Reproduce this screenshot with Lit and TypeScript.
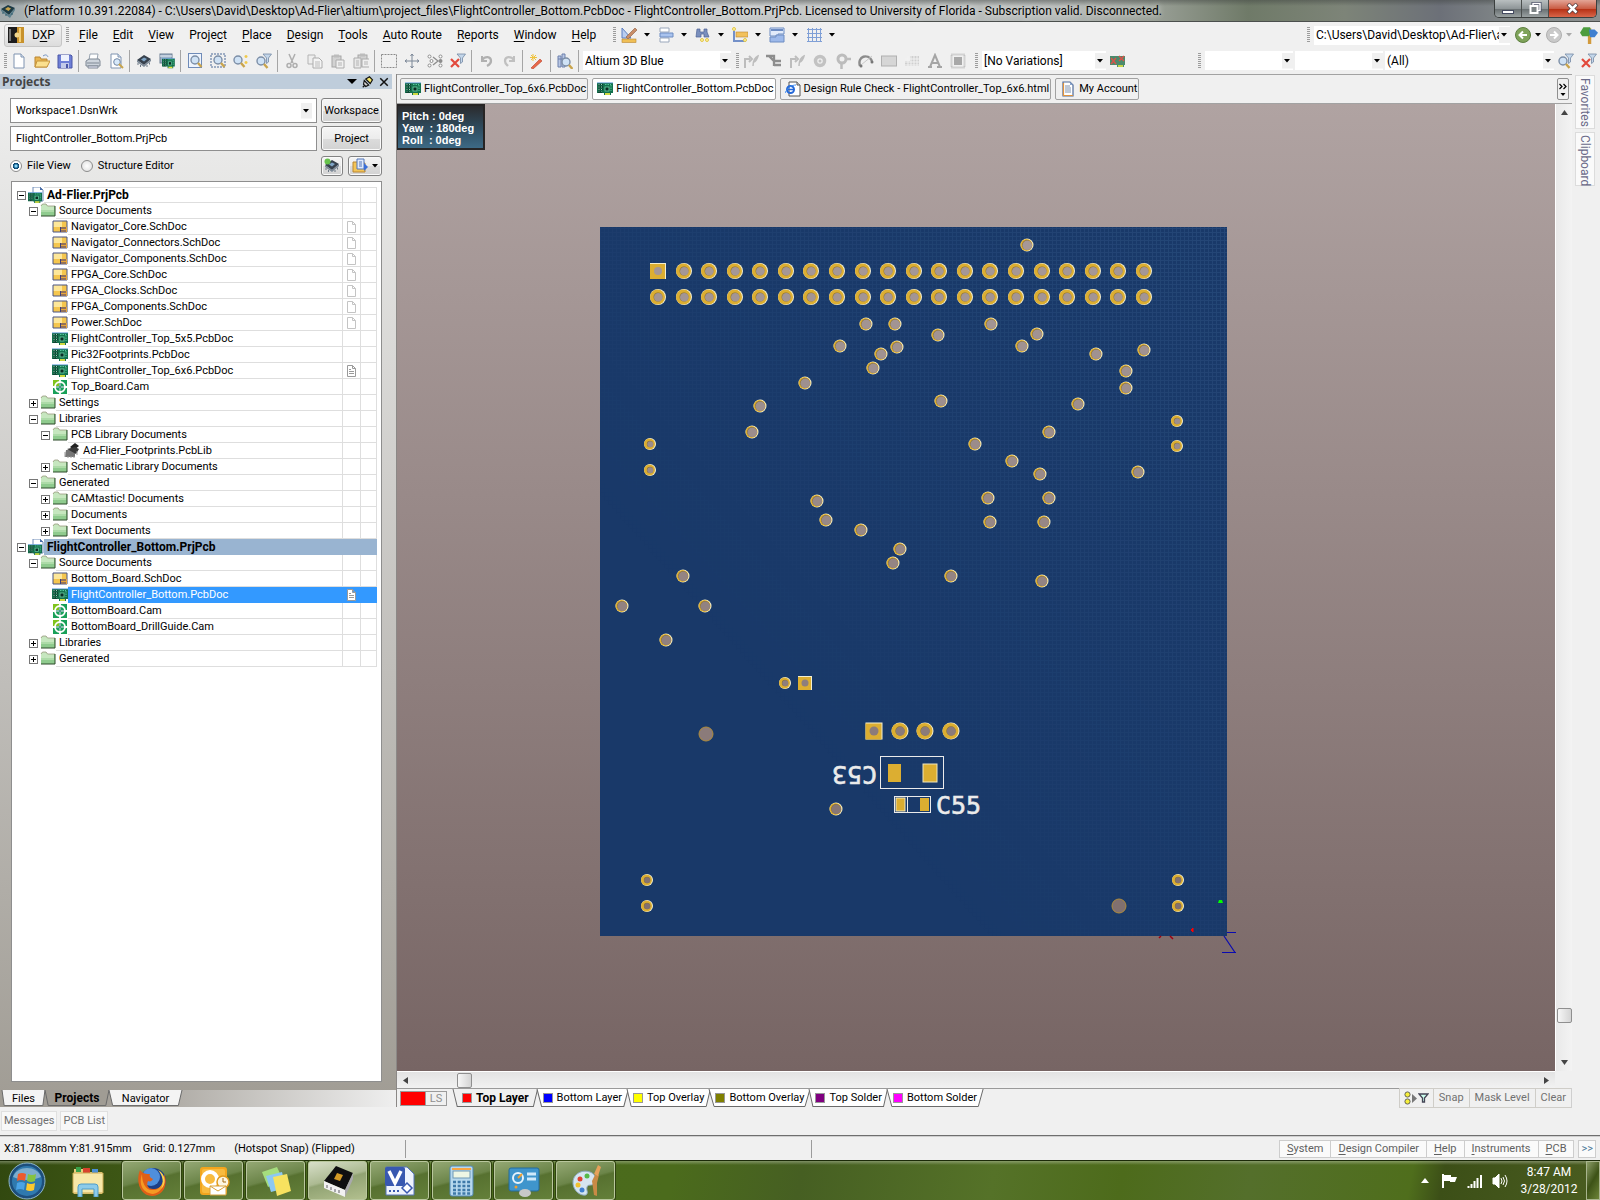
import { LitElement, html, svg, css, nothing } from "lit";
import { customElement, state } from "lit/decorators.js";
import { classMap } from "lit/directives/class-map.js";

const lens = svg`<circle cx="8" cy="7" r="4" fill="#cfe2f5" stroke="#7c8ea6" stroke-width="1.4"/><path d="M11 10l3.500 4" stroke="#c9a44c" stroke-width="2.4"/>`;
const funnel = svg`<path d="M7 1h8.500l-3 4v4l-2 1.500V5z" fill="#c3d6ea" stroke="#7389a3" stroke-width=".8"/>`;
const board = svg`<path d="M0 2h16v10h-2v2H7v-2H0z" fill="#14704d"/><path d="M1 3.500h5M1 6h5M1 8.500h5M1 11h4" stroke="#0b3a2c" stroke-width="1.300"/><path d="M2 3v8M4.500 3v8" stroke="#a9e6ca" stroke-width=".9" stroke-dasharray="1 1.500"/><rect x="8" y="6" width="4" height="4" fill="#0a2d24" stroke="#6fd7ab" stroke-width=".8"/><path d="M8 3.500h6M14 4v6" stroke="#55c99b" stroke-dasharray="1.500 1"/><path d="M8 13h5" stroke="#e6e640" stroke-width="1.800"/><path d="M0 1.800h16" stroke="#6fa7e0" stroke-width=".9"/>`;
const sheet = svg`<path d="M3 1h7l3 3v11H3z" fill="#fff" stroke="#7f93b0"/><path d="M10 1v3h3" fill="#dfe8f4" stroke="#7f93b0"/>`;
const clip = svg`<rect x="2" y="3" width="9" height="11" fill="#d2d2d2" stroke="#a6a6a6"/><rect x="4" y="1.500" width="5" height="3" fill="#bcbcbc"/><path d="M6 7h8v8H6z" fill="#f0f0f0" stroke="#acacac"/><path d="M8 10h4M8 12h4" stroke="#b4b4b4"/>`;
const chip = svg`<path d="M1 7l7-5 7 4-7 6z" fill="#37414d"/><path d="M1 7l7 5 7-6v2l-7 6-7-5z" fill="#7d8a98"/><path d="M5 6.500l3-2 3 1.500-3 2.500z" fill="#7fa5c6"/><path d="M2 10v2M4.500 12v2M11 12v2M13.500 9.500v2" stroke="#6c7885"/>`;

const icons: Record<string, unknown> = {
  app: svg`<path d="M1 6l7-4 7 3-6 7z" fill="#1d3a44"/><path d="M1 6l8 6 6-7v2l-5 8-9-7z" fill="#5d7f8c"/><path d="M5 6l3-2 3 1.500L8.500 8z" fill="#c7a24a"/><path d="M3 9v2M6 11v2M12 10v2" stroke="#2f5d6c"/>`,
  dxp: svg`<rect width="16" height="16" fill="#c8922c"/><path d="M0 0h9v5l-2 3 2 3v5H0z" fill="#1d1d1d"/><path d="M2 2v12" stroke="#777" stroke-width="2"/><circle cx="9" cy="8" r="2.500" fill="#f1d68d"/><path d="M12 1v14" stroke="#f4cf77" stroke-width="2"/>`,
  fresh: sheet,
  open: svg`<path d="M1 4h5l1 2h6v8H1z" fill="#e9b550" stroke="#b98632"/><path d="M3 8h13l-3 6H1z" fill="#fbe08f" stroke="#c4933c"/><path d="M9 3c3-2 4-1 5 1" fill="none" stroke="#7493c2"/>`,
  save: svg`<path d="M1 2h13l1 1v12H1z" fill="#6e7fd6" stroke="#4a56a6"/><rect x="4" y="2" width="8" height="6" fill="#eef2fd"/><rect x="4" y="10" width="8" height="5" fill="#c3cbe9"/><rect x="9" y="11" width="2" height="4" fill="#4a56a6"/>`,
  print: svg`<path d="M5 1h8l-1 6H4z" fill="#fff" stroke="#98a3b0"/><path d="M1 8l3-2h10l1 2v5H1z" fill="#cdd4dc" stroke="#7e8894"/><path d="M3 13h10v2H3z" fill="#eef" stroke="#7e8894"/><path d="M2 10h12" stroke="#7e8894"/>`,
  preview: svg`${sheet}<circle cx="9" cy="9" r="3.300" fill="#d7e9fa" stroke="#7388a5"/><path d="M11 11l4 4" stroke="#c9a44c" stroke-width="2"/>`,
  chip,
  boards: svg`<rect x="1" y="1" width="12" height="9" fill="#9eb2c8" stroke="#6c7f94"/><path d="M1 3h12" stroke="#e8eff7"/><g transform="translate(3 4) scale(.8)">${board}</g>`,
  zoomdoc: svg`<rect x="1.500" y=".5" width="13" height="14" fill="#eef4fd" stroke="#6f8bb8"/>${lens}`,
  zoomarea: svg`<rect x="1" y="1" width="14" height="13" fill="none" stroke="#4c6a98" stroke-dasharray="2 1"/>${lens}`,
  zoomsel: svg`<g transform="translate(-3 0)">${lens}</g><path d="M13 2v3M11.500 3.500h3M13 8v3M11.500 9.500h3" stroke="#efc94c" stroke-width="1.500"/>`,
  zoomfilter: svg`<g transform="translate(-3 1)">${lens}</g>${funnel}`,
  cut: svg`<path d="M5 1l4 9M11 1L7 10" stroke="#aeaeae" stroke-width="1.500"/><circle cx="5" cy="12.500" r="2" fill="none" stroke="#aeaeae" stroke-width="1.500"/><circle cx="11" cy="12.500" r="2" fill="none" stroke="#aeaeae" stroke-width="1.500"/>`,
  copy: svg`<path d="M1 2h7v9H1z" fill="#eee" stroke="#b4b4b4"/><path d="M6 5h6l3 3v7H6z" fill="#f4f4f4" stroke="#acacac"/><path d="M8 9h5M8 11h5M8 13h5" stroke="#bbb"/>`,
  paste: clip,
  paste2: svg`<g transform="translate(3 -1)">${clip}</g><path d="M1 5h7v10H1z" fill="#e8e8e8" stroke="#acacac"/><path d="M3 8h3M3 10h3M3 12h3" stroke="#b4b4b4"/>`,
  select: svg`<rect x=".5" y="1.500" width="15" height="13" fill="none" stroke="#8a8a8a" stroke-dasharray="2 1"/>`,
  move: svg`<path d="M8 1v14M1 8h14M6.500 3L8 1l1.500 2M6.500 13L8 15l1.500-2M3 6.500L1 8l2 1.500M13 6.500L15 8l-2 1.500" fill="none" stroke="#7b8797"/>`,
  deselect: svg`<path d="M6 4l5 4-5 4" fill="none" stroke="#8d8d8d" stroke-width="1.300"/><g fill="#fff" stroke="#8d8d8d"><circle cx="2.500" cy="3.500" r="1.500"/><circle cx="4.500" cy="8" r="1.500"/><circle cx="2.500" cy="12.500" r="1.500"/><circle cx="13.500" cy="3.500" r="1.500"/><circle cx="13.500" cy="12.500" r="1.500"/></g><circle cx="13.500" cy="8" r="2" fill="#8d8d8d"/>`,
  clearf: svg`<path d="M1 6l8 8M9 6l-8 8" stroke="#e2493c" stroke-width="2.200"/>${funnel}`,
  undo: svg`<path d="M4 3v5h5" fill="none" stroke="#b0b0b0" stroke-width="2"/><path d="M4 7c3-4 9-4 9 1 0 3-2 4-4 5" fill="none" stroke="#b0b0b0" stroke-width="2.300"/>`,
  redo: svg`<path d="M13 3v5H8" fill="none" stroke="#c0c0c0" stroke-width="2"/><path d="M13 7C10 3 4 3 4 8c0 3 2 4 3 5" fill="none" stroke="#c0c0c0" stroke-width="2.300"/>`,
  wand: svg`<path d="M2 15l9-9 2 2-9 8z" fill="#e8684a" stroke="#b8432c" stroke-width=".6"/><path d="M4 1v7M1 4.500h7M2 2l5 5M7 2L2 7" stroke="#f0c33c"/>`,
  browse: svg`<path d="M1 3h3v11H1zM5 1h3v13H5z" fill="#b9c7e4" stroke="#6d80ac"/><path d="M1 6h7" stroke="#6d80ac"/><g transform="translate(1 2)">${lens}</g>`,
  route: svg`<path d="M2 15V6h5M6 3l3 3-3 3" fill="none" stroke="#bdbdbd" stroke-width="2"/><path d="M10 13c0-4 1-8 5-10-1 4-2 5-4 6" fill="none" stroke="#bdbdbd" stroke-width="1.500"/>`,
  trace: svg`<path d="M0 3h8v10M3 3l5 5h7M8 12h7" fill="none" stroke="#8d8d8d" stroke-width="2.300"/>`,
  pad: svg`<circle cx="8" cy="8" r="4.500" fill="none" stroke="#c2c2c2" stroke-width="3.500"/><circle cx="8" cy="8" r="1.500" fill="#c2c2c2"/>`,
  via: svg`<circle cx="7" cy="6" r="4" fill="none" stroke="#bcbcbc" stroke-width="3"/><path d="M11 6h5M6.500 10v6" stroke="#bcbcbc" stroke-width="2.500"/>`,
  arc: svg`<path d="M2 13C-1 3 10 0 14 8" fill="none" stroke="#8c8c8c" stroke-width="2.500"/><path d="M3 12l11-9" stroke="#c9c9c9"/><circle cx="3" cy="13" r="1.500" fill="#777"/><circle cx="14" cy="9" r="1.500" fill="#777"/>`,
  fill: svg`<rect x=".5" y="3" width="15" height="10" fill="#d6d6d6" stroke="#b0b0b0"/>`,
  poly: svg`<path d="M1 8h5V3h9v10H1z" fill="#cfcfcf"/><path d="M1 6h14M1 9h14M1 12h14M4 3v10M7 3v10M10 3v10M13 3v10" stroke="#f2f2f2"/>`,
  letter: svg`<path d="M1 14h4M10 14h5M3 14L8 2l5 12M5 10h6" fill="none" stroke="#a5a5a5" stroke-width="2"/>`,
  comp: svg`<rect x="4" y="4" width="8" height="8" fill="#a8a8a8"/><rect x="1.500" y="1.500" width="13" height="13" fill="none" stroke="#b4b4b4" stroke-width="2" stroke-dasharray="1 1"/>`,
  variant: svg`<path d="M0 3h15v9h-1v2H7v-2H0z" fill="#4b8a6c"/><path d="M8 13h5" stroke="#e6e640" stroke-width="1.600"/><path d="M1 5l5 6M6 5l-5 6M9 3l5 5M14 3L9 8" stroke="#d8534a" stroke-width="1.500"/>`,
  draw: svg`<path d="M1 1v10h9z" fill="#b9cdf0" stroke="#5d7fc0"/><path d="M5 10l9-9 2 2-9 9z" fill="#c98d68" stroke="#8c5a3c" stroke-width=".6"/><rect x="1" y="12" width="14" height="3.500" fill="#f0bf55" stroke="#b98632" stroke-width=".6"/>`,
  align: svg`<path d="M2 1h9v4H2zM2 11h9v4H2z" fill="#fff" stroke="#9aa7bb"/><path d="M2 6h13v4H2z" fill="#a9c3ee" stroke="#6d8cc2"/>`,
  find: svg`<path d="M2 2h3v3h4V2h3v3l2 5H9V7H6v3H1z" fill="#7a8fbd" stroke="#4d6396" stroke-width=".7"/><circle cx="7" cy="13" r="1.500" fill="#fff3a0" stroke="#e2c64a"/><circle cx="12" cy="13" r="1.500" fill="#fff3a0" stroke="#e2c64a"/>`,
  dim: svg`<path d="M2 4v10h12" fill="none" stroke="#7390c8" stroke-width="2"/><rect x="4" y="5" width="12" height="5" fill="#f2c15c" stroke="#b98632" stroke-width=".6"/><circle cx="2" cy="2" r="1.500" fill="#fff3a0" stroke="#e2c64a"/><circle cx="13" cy="13" r="1.500" fill="#fff3a0" stroke="#e2c64a"/>`,
  rooms: svg`<path d="M1 1h14v6H9v2H1z" fill="#e2ebfa" stroke="#6d8cc2"/><path d="M1 10h6V8h8v7H1z" fill="#9db9ea" stroke="#6d8cc2"/><path d="M2 3h12" stroke="#6d8cc2" stroke-width="2"/>`,
  grid: svg`<path d="M2.500 1v14M6.500 1v14M10.500 1v14M14.500 1v14M1 2.500h15M1 6.500h15M1 10.500h15M1 14.500h15" stroke="#7f9fd6"/>`,
  back: svg`<circle cx="8" cy="8" r="7.500" fill="#7fa35a" stroke="#5e7f40"/><path d="M12 8H5M8 4.500L4.500 8 8 11.500" fill="none" stroke="#fff" stroke-width="2"/>`,
  fwd: svg`<circle cx="8" cy="8" r="7.500" fill="#c9c9c9" stroke="#b0b0b0"/><path d="M4 8h7M8 4.500L11.500 8 8 11.500" fill="none" stroke="#fff" stroke-width="2"/>`,
  sign: svg`<path d="M7 2h3v14H7z" fill="#d29a3c"/><path d="M0 6l3-5h6l1 5-2 3H2z" fill="#4c9c3f"/><path d="M8 3h5l3 3-3 4H9z" fill="#3f7fd0"/>`,
  board,
  project: svg`<path d="M5 0h7l3 3v11H5z" fill="#fff" stroke="#6f8bb8"/><path d="M12 0v3h3" fill="#4a6ea8"/><g transform="translate(0 4) scale(.88 .85)">${board}</g>`,
  folder: svg`<path d="M1 3l1.500-2H6l1.500 2H15v10H1z" fill="#8fcb8e"/><path d="M1 3l1.500-2H6l1.500 2H14v4H1z" fill="#c6e7bf"/><path d="M1 7h13v2H1z" fill="#addba8"/><path d="M1 3l1.500-2H6l1.500 2H15" stroke="#9a9a80" stroke-width=".8"/><path d="M15 3v10H1" stroke="#2c4a2a"/>`,
  sch: svg`<path d="M1 2h14v11H1z" fill="#f5c64e"/><path d="M1 2h9v6H1z" fill="#fde79a"/><path d="M1 2h14v11H1z" stroke="#4b5583"/><path d="M8 8h7v5H8z" fill="#e9a63a"/><path d="M8 9h6M8 12h6M8.500 8v5" stroke="#3d3f7a"/>`,
  cam: svg`<path d="M1 1h14v14H1z" fill="#18a058"/><path d="M1 1h7v7H1z" fill="#7fc41c"/><circle cx="8" cy="8" r="5" stroke="#fff" stroke-width="1.800"/><path d="M8 0v16M0 8h16" stroke="#fff" stroke-width="1.800"/><path d="M8 4v8M4 8h8" stroke="#0a7a5a"/>`,
  lib: svg`<path d="M6 4l5-4 4 3-5 4z" fill="#222"/><path d="M2 7h9v7H1z" fill="#767676"/><path d="M3 6l8-2 4 2-3 5z" fill="#3a3a3a"/><path d="M1 9v5M4 13v2M7 13v2M10 13v2M13 8v4" stroke="#999"/>`,
  pageEmpty: svg`<path d="M4.500 2.500h5l3 3v8h-8zM9.500 2.500v3h3" fill="#fff" stroke="#c4c4c4"/>`,
  pageOpen: svg`<path d="M4.500 2.500h5l3 3v8h-8zM9.500 2.500v3h3" fill="#fff" stroke="#9a9a9a"/><path d="M6 6.500h2M6 8.500h5M6 10.500h5" stroke="#9a9a9a"/>`,
  ie: svg`<path d="M4 1h8l3 3v11H4z" fill="#fff" stroke="#555"/><path d="M12 1v3h3" stroke="#555" fill="#ddd"/><circle cx="5.500" cy="8.500" r="3.500" stroke="#2468d8" stroke-width="2"/><path d="M3 8.500h6" stroke="#2468d8" stroke-width="1.500"/><path d="M0 12C3 6 7 4 11 4" stroke="#3f8cf0"/>`,
  account: svg`<path d="M3 1h7l3 3v11H3z" fill="#fff" stroke="#4e6a98" stroke-width="1.200"/><path d="M3.500 15V2M3 14.500h10" stroke="#e0933c" stroke-width="1.200"/><path d="M10 1v3h3z" fill="#8aa4cc"/><path d="M5 5h5M5 7h6M5 9h6M5 11h6" stroke="#7f93b0"/>`,
  refresh: svg`${chip}<circle cx="3.500" cy="3.500" r="3" fill="#66c24c"/>`,
  folderdoc: svg`<path d="M1 4h5l1 1h6v9H1z" fill="#f3c456" stroke="#b98632"/><path d="M5 1h7v10H5z" fill="#dfe9fb" stroke="#5377ba"/><path d="M7 4h3M7 6h3M7 8h3" stroke="#5377ba"/><path d="M12 5l4 4-4 4z" fill="#3a6fd8"/>`,
  pin: svg`<path d="M5 4l5-3 4 4-3 5z" fill="#f2e36a" stroke="#111" stroke-width="1.500"/><path d="M3 6l6 6-4 2-3-3zM4 12l-3 3" fill="#ccc" stroke="#111" stroke-width="1.500"/>`,
  close: svg`<path d="M3 3l10 10M13 3L3 13" stroke="#111" stroke-width="2"/>`,
};

const ic = (name: string, size = 16) =>
  html`<svg class="ic" width=${size} height=${size} viewBox="0 0 16 16" fill="none" aria-hidden="true">${icons[name]}</svg>`;
const down = (color = "#000") =>
  html`<svg class="arrow" width="6" height="4" viewBox="0 0 6 4" aria-hidden="true"><path d="M0 0h6L3 3.500z" fill=${color} /></svg>`;

type Row = { level: number; icon: string; text: string; open?: boolean; page?: "pageEmpty" | "pageOpen"; bold?: boolean };
const r = (level: number, icon: string, text: string, more: Partial<Row> = {}): Row => ({ level, icon, text, ...more });
const rows: Row[] = [
  r(0, "project", "Ad-Flier.PrjPcb", { open: true, bold: true }),
  r(1, "folder", "Source Documents", { open: true }),
  ...["Navigator_Core", "Navigator_Connectors", "Navigator_Components", "FPGA_Core", "FPGA_Clocks", "FPGA_Components", "Power"].map((n) =>
    r(2, "sch", `${n}.SchDoc`, { page: "pageEmpty" }),
  ),
  r(2, "board", "FlightController_Top_5x5.PcbDoc"),
  r(2, "board", "Pic32Footprints.PcbDoc"),
  r(2, "board", "FlightController_Top_6x6.PcbDoc", { page: "pageOpen" }),
  r(2, "cam", "Top_Board.Cam"),
  r(1, "folder", "Settings", { open: false }),
  r(1, "folder", "Libraries", { open: true }),
  r(2, "folder", "PCB Library Documents", { open: true }),
  r(3, "lib", "Ad-Flier_Footprints.PcbLib"),
  r(2, "folder", "Schematic Library Documents", { open: false }),
  r(1, "folder", "Generated", { open: true }),
  r(2, "folder", "CAMtastic! Documents", { open: false }),
  r(2, "folder", "Documents", { open: false }),
  r(2, "folder", "Text Documents", { open: false }),
  r(0, "project", "FlightController_Bottom.PrjPcb", { open: true, bold: true }),
  r(1, "folder", "Source Documents", { open: true }),
  r(2, "sch", "Bottom_Board.SchDoc"),
  r(2, "board", "FlightController_Bottom.PcbDoc", { page: "pageOpen" }),
  r(2, "cam", "BottomBoard.Cam"),
  r(2, "cam", "BottomBoard_DrillGuide.Cam"),
  r(1, "folder", "Libraries", { open: false }),
  r(1, "folder", "Generated", { open: false }),
];

/* Menu captions: "&" marks the access key. */
const menus = ["&File", "&Edit", "&View", "Proje&ct", "&Place", "&Design", "&Tools", "&Auto Route", "&Reports", "&Window", "&Help"];
const caption = (s: string) => {
  const i = s.indexOf("&");
  return i < 0 ? html`${s}` : html`${s.slice(0, i)}<u>${s[i + 1]}</u>${s.slice(i + 2)}`;
};

const vias: [number, number][] = [
  [1027, 245], [866, 324], [895, 324], [938, 335], [991, 324], [1037, 334], [1022, 346], [840, 346], [881, 354], [897, 347],
  [873, 368], [1096, 354], [1144, 350], [1126, 371], [1126, 388], [805, 383], [760, 406], [752, 432], [941, 401], [1078, 404],
  [975, 444], [1049, 432], [1012, 461], [1040, 474], [1138, 472], [988, 498], [1049, 498], [990, 522], [1044, 522], [817, 501],
  [826, 520], [861, 530], [900, 549], [893, 563], [951, 576], [1042, 581], [683, 576], [622, 606], [705, 606], [666, 640], [836, 809],
];
const smallPads: [number, number][] = [
  [650, 444], [650, 470], [1177, 421], [1177, 446], [647, 880], [647, 906], [1178, 880], [1178, 906], [785, 683],
];
const layers = [
  ["Top Layer", "#ff0000"], ["Bottom Layer", "#0000ff"], ["Top Overlay", "#ffff00"],
  ["Bottom Overlay", "#808000"], ["Top Solder", "#800080"], ["Bottom Solder", "#ff00ff"],
];

/* Hole colour follows the backdrop gradient seen through the board. */
const hole = (y: number) => {
  const t = (y - 104) / 967;
  const mix = (a: number, b: number) => Math.round(a + (b - a) * t);
  return `rgb(${mix(174, 120)},${mix(161, 102)},${mix(160, 101)})`;
};
const disc = (x: number, y: number, outer: number, inner: number) => svg`
  <circle cx=${x} cy=${y} r=${outer} fill="#f4efd0"/>
  <circle cx=${x - 0.5} cy=${y} r=${outer - 0.5} fill="#dcae31"/>
  <circle cx=${x} cy=${y} r=${inner} fill="#8b7136"/>
  <circle cx=${x + 0.3} cy=${y + 0.3} r=${inner - 0.2} fill=${hole(y)}/>`;
const square = (x: number, y: number, half: number, inner: number) => svg`
  <rect x=${x - half} y=${y - half} width=${half * 2} height=${half * 2} fill="#f4efd0"/>
  <rect x=${x - half} y=${y - half + 1} width=${half * 2 - 1} height=${half * 2 - 1} fill="#dcae31"/>
  <circle cx=${x} cy=${y} r=${inner} fill=${hole(y)}/>`;

const shared = css`
  :host { box-sizing: border-box; }
  *, *::before, *::after { box-sizing: border-box; }
  button, select, input { font: inherit; color: inherit; margin: 0; padding: 0; border: 0; background: none; border-radius: 0; }
  button { white-space: nowrap; cursor: default; }
  .ic, .arrow { display: block; flex: none; }
`;

@customElement("pcb-canvas")
class PcbCanvas extends LitElement {
  static styles = [shared, css`
    :host { display: block; position: relative; min-width: 0; min-height: 0; background: linear-gradient(#b0a3a2, #776564); overflow: hidden; }
    .scene { position: absolute; inset: 0; width: 100%; height: 100%; display: block; }
    .silk { font-family: "DejaVu Sans Mono", monospace; font-size: 25px; fill: #ebebeb; stroke: #ebebeb; stroke-width: .6px; }
    .hud { position: relative; width: 88px; margin: 0; padding: 4px 0 0 4px; height: 46px; border: 2px solid #262424; border-left-width: 1px;
      background: linear-gradient(#2b2b2d, #2f4d61 55%, #3d6a85); color: #fff; font: bold 11px/12px "Liberation Sans", Arial, sans-serif; }
    .hud div { white-space: pre; }
  `];
  render() {
    const cols = Array.from({ length: 20 }, (_, i) => 658 + Math.round(i * 25.57));
    return html`
      <svg class="scene" viewBox="397 104 1158 967" role="img" aria-label="Board, bottom side">
        <defs>
          <pattern id="weave" width="4" height="4" patternUnits="userSpaceOnUse">
            <path d="M0 .5h4M.5 0v4" stroke="#6f9bd0" stroke-width="1" opacity=".15" />
          </pattern>
          <linearGradient id="fade" x1="0" y1="1" x2="1" y2="0">
            <stop offset=".3" stop-color="#fff" stop-opacity="0" /><stop offset="1" stop-color="#fff" stop-opacity=".9" />
          </linearGradient>
          <mask id="m"><rect x="600" y="227" width="627" height="709" fill="url(#fade)" /></mask>
        </defs>
        <rect x="600" y="227" width="627" height="709" fill="#193969" />
        <rect x="600" y="227" width="627" height="709" fill="url(#weave)" mask="url(#m)" />
        ${square(658, 271, 8, 4)}
        ${cols.slice(1).map((x) => disc(x, 271, 8, 4.5))}
        ${cols.map((x) => disc(x, 297, 8, 4.5))}
        ${vias.map(([x, y]) => disc(x, y, 6.5, 5))}
        ${smallPads.map(([x, y]) => disc(x, y, 6, 3.2))}
        ${square(805, 683, 7, 3.5)} ${square(874, 731, 8.5, 4.5)}
        ${[900, 925, 951].map((x) => disc(x, 731, 8.5, 4.7))}
        ${[[706, 734], [1119, 906]].map(([x, y]) => svg`<circle cx=${x} cy=${y} r="7" fill=${hole(y)} stroke="#b08c3c" stroke-width="1"/>`)}
        <g fill="none" stroke="#ebebeb">
          <rect x="880.500" y="756.500" width="63" height="32" /><rect x="894.500" y="796.500" width="36" height="16" /><path d="M907.500 797v16" />
        </g>
        <g fill="#dcae31" stroke="#efe6bd" stroke-width="0">
          <rect x="888" y="764" width="13" height="18" /><rect x="923" y="764" width="14" height="18" stroke-width="1" />
          <rect x="896" y="798" width="9" height="13" stroke-width="1" /><rect x="920" y="798" width="9" height="13" />
        </g>
        <text class="silk" x="936" y="814">C55</text>
        <text class="silk" transform="translate(877 766) rotate(180)" x="0" y="0">C53</text>
        <path d="M1218 903h5l-1-3h-3z" fill="#0f0" /><path d="M1193 928l-2 2 2 2z" fill="#f00" stroke="#f00" />
        <path d="M1159 938l2-2M1170 936l3 3" stroke="#a00010" stroke-width="1.500" />
        <path d="M1227 932.500h9M1224 936l11 16.500M1222 952.500h14" stroke="#0a0ab0" stroke-width="1.200" fill="none" />
      </svg>
      <div class="hud"><div>Pitch : 0deg</div><div>Yaw  : 180deg</div><div>Roll  : 0deg</div></div>
    `;
  }
}

@customElement("project-tree")
class ProjectTree extends LitElement {
  @state() selected = "FlightController_Bottom.PcbDoc";
  static styles = [shared, css`
    :host { display: block; background: #fff; border: 1px solid #8e8e8e; padding: 5px 4px 0 5px; overflow: hidden; }
    table { width: 100%; border-collapse: separate; border-spacing: 0; table-layout: fixed; font: 11px/16px Roboto, Arial, sans-serif; color: #000; }
    .mid { width: 18px; }
    .end { width: 17px; }
    td { padding: 0; height: 16px; border-bottom: 1px solid #dedede; border-left: 1px solid #dedede; }
    td:first-child { border: 0; }
    td:last-child { border-right: 1px solid #dedede; }
    tr:first-child td:not(:first-child), tr:first-child .label { box-shadow: inset 0 1px #dedede; }
    .name { display: flex; height: 16px; align-items: center; }
    .l1 { padding-left: 12px; }
    .l2 { padding-left: 24px; }
    .l3 { padding-left: 36px; }
    .exp { flex: none; width: 9px; height: 9px; border: 1px solid #777; background: #fff; margin-right: 2px; display: grid; place-items: center; }
    .none { border-color: transparent; background: none; }
    .label { flex: 1; height: 16px; padding-left: 3px; border-bottom: 1px solid #dedede; white-space: nowrap; overflow: hidden; }
    .bold .label { font-weight: bold; font-size: 12px; }
    .page { display: block; height: 15px; overflow: hidden; }
    .current .label, .current td:not(:first-child) { background: #99b4d1; border-color: #99b4d1; }
    .chosen .label, .chosen td:not(:first-child) { background: #3399ff; border-color: #3399ff; color: #fff; }
  `];
  render() {
    return html`<table aria-label="Project files">
      <colgroup><col /><col class="mid" /><col class="end" /></colgroup>
      <tbody>
        ${rows.map((x) => html`<tr class=${classMap({ bold: !!x.bold, current: x.text === "FlightController_Bottom.PrjPcb", chosen: x.text === this.selected })}
          @click=${() => (this.selected = x.text)}>
          <td><div class="name l${x.level}">
            ${x.open === undefined
              ? html`<span class="exp none"></span>`
              : html`<button class="exp" aria-label=${x.open ? "Collapse" : "Expand"}>
                <svg class="ic" width="7" height="7" viewBox="0 0 7 7"><path d=${x.open ? "M1 3.500h5" : "M1 3.500h5M3.500 1v5"} stroke="#000" /></svg></button>`}
            ${ic(x.icon)}<div class="label">${x.text}</div></div></td>
          <td>${x.page ? html`<span class="page">${ic(x.page)}</span>` : nothing}</td><td></td>
        </tr>`)}
      </tbody>
    </table>`;
  }
}

@customElement("windows-taskbar")
class WindowsTaskbar extends LitElement {
  static styles = [shared, css`
    :host { display: flex; align-items: stretch; height: 40px; border-top: 1px solid #1b2a08; color: #fff; font: 12px/17px Roboto, sans-serif;
      background: linear-gradient(rgba(255,255,255,.3), rgba(255,255,255,0) 4px), linear-gradient(100deg, #31480f, #3a5213 5%, #4a6a1c 20%, #4b6b1c 42%, #465f22 50%, #557228 62%, #4d6b1b 70%, #546f2b 78%, #4f6e1c 88%, #3c4f17 90%, #4a5d20); }
    .start, .pinned { width: 54px; display: grid; place-items: center; flex: none; }
    .pinned { width: 68px; }
    .apps { display: flex; gap: 3px; flex: 1; min-width: 0; }
    .app { width: 59px; flex: none; display: grid; place-items: center; border: 1px solid #b9c79d; border-radius: 3px; box-shadow: 0 0 0 1px #2f4210;
      background: linear-gradient(165deg, #94a874, #6c8549 45%, #577130 50%, #64803a); }
    .active { background: linear-gradient(165deg, #d8dfc9, #acba92 45%, #91a373 50%, #b3c08f); }
    .tray { display: flex; align-items: center; flex: none; }
    .tray button { height: 24px; width: 25px; display: grid; place-items: center; }
    .clock { width: 74px; text-align: center; padding-top: 1px; }
    .desk { width: 14px; border: 1px solid #a9b58e; background: linear-gradient(120deg, #8c9d68, #3d5216 50%, #6d8438); }
  `];
  render() {
    const big = (c: unknown) => html`<svg width="32" height="32" viewBox="0 0 32 32" fill="none" aria-hidden="true">${c}</svg>`;
    const apps: [string, unknown][] = [
      ["Firefox", svg`<circle cx="17" cy="16" r="13" fill="#1d3f86"/><circle cx="15" cy="12" r="9" fill="#4f8fdc"/><path d="M4 5C-1 18 5 31 16 31s17-12 12-22c1 9-4 16-11 15-5 0-7-4-5-8 2 1 4 0 5-2-3-1-4-3-3-5-4 0-7 0-10-4z" fill="#df5f17"/><path d="M6 9c-4 12 2 19 11 20 8-1 12-9 11-19 0 9-5 16-12 15-7 0-10-8-10-16z" fill="#f59a24"/><path d="M22 5c9 5 8 15 3 19 3-7 2-13-3-19z" fill="#fbd24c"/>`],
      ["Outlook", svg`<rect x="2" y="2" width="27" height="28" rx="3" fill="#f2a51e"/><rect x="4" y="4" width="23" height="24" rx="2" fill="#f8bb3f"/><circle cx="12" cy="14" r="7" stroke="#fff" stroke-width="4"/><circle cx="25" cy="17" r="6" fill="#fdf6e2" stroke="#e09a1c" stroke-width="1.500"/><path d="M25 13v4h3" stroke="#a56a10"/><path d="M12 21h16v9H12z" fill="#fff" stroke="#d9a23a"/><path d="M12 21l8 5 8-5" stroke="#d9a23a"/>`],
      ["Sticky Notes", svg`<path d="M2 7l15-5 6 13-15 7z" fill="#a5dd7e"/><path d="M6 11l16-4 4 16-15 4z" fill="#8cc8f2"/><path d="M13 12l14-3 4 17-14 5z" fill="#f7e25f"/>`],
      ["Altium", svg`<path d="M14 1l17 7-8 17L2 16z" fill="#0e0e10"/><path d="M15 8l6 2-3 6-6-2z" fill="#d39a26"/><path d="M2 16l21 9v7L2 23z" fill="#f1f1f2"/><path d="M23 25l8-17v6l-8 18z" fill="#a9a9ad"/><path d="M5 20v3M9 22v3M13 24v3M17 25v3" stroke="#8f8f94" stroke-width="1.500"/>`],
      ["Visio", svg`<path d="M2 2h21l7 7v21H2z" fill="#eef3fd" stroke="#5573b8"/><rect x="1" y="2" width="20" height="19" rx="2" fill="#3858b0"/><path d="M5 6l6 12 6-12" stroke="#fff" stroke-width="3.500"/><path d="M23 18l5 5-5 5-5-5z" fill="#fff" stroke="#3858b0" stroke-width="1.500"/><path d="M5 26h10" stroke="#3858b0" stroke-dasharray="2 2" stroke-width="2"/>`],
      ["Calculator", svg`<rect x="4" y="1" width="23" height="30" rx="2" fill="#b6d8ee" stroke="#4f86b0"/><path d="M6 4h19" stroke="#f5a545" stroke-width="2"/><rect x="7" y="6" width="17" height="7" fill="#eef6e4" stroke="#6f98b5"/><g stroke="#3f79a8" stroke-width="2.500" stroke-dasharray="3 1.700"><path d="M7 17h18M7 21h18M7 25h18M7 28.500h18"/></g>`],
      ["Control Panel", svg`<rect x="1" y="3" width="30" height="23" rx="2" fill="#3f95cc" stroke="#246a9a"/><circle cx="10" cy="13" r="5" stroke="#e6f4fd" stroke-width="2"/><path d="M10 13l4-4" stroke="#f0a030" stroke-width="2"/><path d="M19 9h9M19 14h9" stroke="#cfe9fa" stroke-width="3"/><circle cx="8" cy="22" r="1.500" fill="#f0a030"/><ellipse cx="17" cy="28" rx="6" ry="4" fill="#c8c8c8"/>`],
      ["Paint", svg`<path d="M3 19C2 9 12 4 20 7c6 2 8 9 4 12-3 2-6 0-7 3-1 4 2 5-1 8-6 1-12-4-13-11z" fill="#d5e5f0" stroke="#8fabc0"/><circle cx="10" cy="14" r="2.500" fill="#e0402e"/><circle cx="17" cy="11" r="2.500" fill="#55b948"/><circle cx="8" cy="20" r="2.500" fill="#f2c230"/><circle cx="12" cy="25" r="2.500" fill="#3f7fd0"/><path d="M24 30l-2-14 4-8 3 2-2 8 0 13z" fill="#c98a45"/><path d="M24 9l4-9 3 2-3 9z" fill="#e6a15a"/>`],
    ];
    return html`
      <button class="start" aria-label="Start"><svg width="38" height="38" viewBox="0 0 38 38">
        <circle cx="19" cy="19" r="18" fill="#1d4e7c" stroke="#8fb6c8" /><circle cx="19" cy="19" r="15" fill="#2f79ae" /><path d="M5 15C9 3 29 3 33 15c-9 4-19 4-28 0z" fill="#a9c9dd" opacity=".65" />
        <path d="M10 12q4-2 8 0l-1 7q-4-2-8 0z" fill="#ee5a2c" /><path d="M20 12q4 2 8 0l-1 7q-4 2-8 0z" fill="#85c340" />
        <path d="M9 21q4-2 8 0l-1 7q-4-2-8 0z" fill="#4aa3e6" /><path d="M19 21q4 2 8 0l-1 7q-4 2-8 0z" fill="#fbc92e" /></svg></button>
      <button class="pinned" aria-label="Explorer">${big(svg`<path d="M2 4h12l2 3h14v22H2z" fill="#e9cf7e"/><path d="M4 2h5v5H4z" fill="#3aa04a"/><path d="M11 3h7v5h-7z" fill="#d8432e"/><path d="M20 4h6v4h-6z" fill="#4a8fd8"/><path d="M1 8h30v20H1z" fill="#f7e7a8" stroke="#cbab55"/><path d="M6 32V22q0-3 3-3h14q3 0 3 3v10h-4v-8H10v8z" fill="#8ccbea" stroke="#4f9cc8"/>`)}</button>
      <div class="apps">${apps.map(([n, c]) => html`<button class=${classMap({ app: true, active: n === "Altium" })} aria-label=${n}>${big(c)}</button>`)}</div>
      <div class="tray">
        <button aria-label="Show hidden icons"><svg width="8" height="5"><path d="M0 5l4-5 4 5z" fill="#fff" /></svg></button>
        <button aria-label="Action Center"><svg width="16" height="16" viewBox="0 0 16 16"><path d="M1 1v14" stroke="#fff" stroke-width="2" /><path d="M2 2h7v2h6l-2 5H8V8H2z" fill="#fff" /></svg></button>
        <button aria-label="Network"><svg width="16" height="14" viewBox="0 0 16 14"><path d="M1.500 12v2M4.500 10v4M7.500 7v7M10.500 4v10M14 1v13" stroke="#fff" stroke-width="2" /></svg></button>
        <button aria-label="Volume"><svg width="16" height="16" viewBox="0 0 16 16" fill="none" stroke="#fff"><path d="M1 5h2l4-4v14l-4-4H1z" fill="#fff" /><path d="M9 5q2 3 0 6M11 4q3 4 0 8M13 2q4 6 0 12" /></svg></button>
        <div class="clock">8:47 AM<br />3/28/2012</div>
      </div>
      <button class="desk" aria-label="Show desktop"></button>`;
  }
}

@customElement("app-root")
class AppRoot extends LitElement {
  @state() layer = "Top Layer";
  static styles = [shared, css`
    :host { display: flex; flex-direction: column; min-height: 100vh; background: #f0f0f0; color: #000; font: 12px/16px Roboto, sans-serif; overflow: hidden; }
    .ui { font-size: 11px; }
    .grow { flex: 1; min-width: 0; }

    .title { display: flex; align-items: flex-start; height: 22px; border-bottom: 1px solid #4b4f4d; padding: 0 3px 0 0;
      background: linear-gradient(rgba(60,64,62,.45), rgba(255,255,255,0) 6px), linear-gradient(90deg, #a1a9ab, #c3c7c8 6%, #bcbfbf 20%, #c6c8c8 45%, #b4b8b6 66%, #9aa097 72%, #6f7a68 78%, #7d8478 84%, #6c7078 90%, #858b8b 95%, #8c9090); }
    .title .ic { margin: 3px 8px 0 0; }
    .title h1 { margin: 0; font: 12px/22px Roboto, sans-serif; white-space: nowrap; text-shadow: 0 0 6px #fff; flex: 1; min-width: 0; overflow: hidden; }
    .wins { display: flex; height: 18px; border: 1px solid #3b3f3e; border-top: 0; border-radius: 0 0 5px 5px; overflow: hidden; }
    .wins button { width: 27px; display: grid; place-items: center; border-right: 1px solid #4b4f4e; background: linear-gradient(#b9bfc0, #8f9698 50%, #676e70 52%, #9aa1a2); }
    .wins .x { width: 47px; border: 0; background: linear-gradient(#e3a596, #ca5d45 50%, #b42e12 52%, #d9664a); }

    .bar { display: flex; align-items: center; height: 26px; }
    .dxp { display: flex; align-items: center; gap: 8px; width: 58px; height: 23px; margin-left: 4px; padding-left: 3px; border: 1px solid #c6c6c6; border-radius: 3px; background: linear-gradient(#f4f4f4, #dcdcdc); }
    .grip { width: 3px; height: 16px; flex: none; background: repeating-linear-gradient(#9c9c9c 0 1px, #f0f0f0 1px 2px); }
    .menus { display: flex; gap: 15px; width: 540px; padding-left: 6px; margin-left: 4px; white-space: nowrap; }
    .menus a { color: inherit; text-decoration: none; }
    u { text-underline-offset: 2px; }
    .drop { display: flex; align-items: center; width: 37px; gap: 7px; height: 22px; padding-left: 1px; }
    .drops { display: flex; padding-left: 4px; }
    .combo { display: grid; align-items: center; background: #fff; height: 19px; grid-template-columns: 1fr 9px; padding-left: 2px; min-width: 0; }
    .combo select { grid-area: 1 / 1 / 2 / 3; appearance: none; width: 100%; height: 100%; outline: 0; text-overflow: clip; }
    .combo .arrow { grid-area: 1 / 2; z-index: 1; pointer-events: none; box-shadow: 0 0 0 6px #f0f0f0; background: #f0f0f0; clip-path: inset(-6px -3px -6px -2px); }
    .addr { width: 196px; }
    .nav { display: flex; align-items: center; gap: 4px; width: 31px; }
    .navs { display: flex; padding-left: 5px; }
    .tools { padding-bottom: 1px; }
    .tool { width: 23px; height: 22px; display: grid; place-items: center; flex: none; }
    .sep { width: 1px; height: 22px; background: #a5a5a5; flex: none; margin: 0 2px; }
    .g4 { margin-left: 4px; }
    .g6 { margin-left: 6px; }
    .style { width: 148px; margin: 0 5px 0 2px; }
    .vari { width: 124px; margin-left: 4px; }
    .c88 { width: 88px; margin-right: 2px; }
    .c169 { width: 169px; }

    .work { display: flex; flex: 1; min-height: 0; }
    .panel { width: 397px; flex: none; display: flex; flex-direction: column; background: linear-gradient(#f0f0f0, #e9e9e8 8%, #c0beba 58%, #a09c94); border-right: 1px solid #8b8886; }
    .phead { display: flex; align-items: center; height: 15px; margin-right: 4px; background: #bfcddb; color: #444; padding: 0 0 0 2px; }
    .phead h2 { margin: 0; font: bold 12px/15px "Open Sans", sans-serif; flex: 1; }
    .phead button { width: 16px; height: 14px; display: grid; place-items: center; }
    .form { display: grid; grid-template-columns: 1fr 61px; gap: 3px 4px; padding: 9px 14px 0 10px; }
    .box { height: 25px; border: 1px solid #8f8f8f; background: #fff; width: 100%; }
    .form input.box { padding-left: 5px; }
    .form .combo { padding: 0 5px; height: 25px; grid-template-columns: 1fr 8px; }
    .push { height: 25px; border: 1px solid #828282; border-radius: 3px; background: linear-gradient(#f5f5f5, #ececec 50%, #dcdcdc 52%, #d2d2d2); box-shadow: inset 0 0 0 1px #fafafa; text-align: center; }
    .views { display: flex; align-items: center; padding: 4px 14px 0 10px; height: 25px; gap: 4px; }
    .views label { display: flex; align-items: center; gap: 5px; margin-right: 6px; }
    .views input { appearance: none; width: 12px; height: 12px; border: 1px solid #8c8c8c; border-radius: 50%; background: radial-gradient(#fff, #dcdcdc); }
    .views input:checked { background: radial-gradient(#8fd4f2 10%, #1a6c9c 30%, #0b3c62 42%, #fff 50%); }
    .views .push { height: 20px; width: 22px; display: flex; align-items: center; justify-content: center; gap: 4px; }
    .views .wide { width: 34px; margin-left: 1px; }
    project-tree { margin: 5px 14px 8px 11px; flex: 1; }
    .ptabs { display: flex; height: 17px; background: linear-gradient(90deg, #a09c94, #a6a29b 35%, #efefef); padding-left: 2px; align-items: flex-start; line-height: 15px; }
    .cut { position: relative; height: 16px; text-align: center; }
    .cut .edge { position: absolute; inset: 0; width: 100%; height: 100%; overflow: visible; }
    .cut .in { position: relative; display: flex; align-items: center; justify-content: center; gap: 5px; }
    .w45 { width: 43px; } .w64 { width: 64px; } .w73 { width: 73px; }
    .strong { font-weight: bold; font-size: 12px; }

    .main { flex: 1; min-width: 0; display: flex; flex-direction: column; }
    .docs { display: flex; gap: 4px; height: 30px; padding: 3px 3px 0 3px; border-top: 1px solid #a2a2a2; border-bottom: 1px solid #a2a2a2; }
    .doc { display: flex; align-items: center; gap: 3px; height: 22px; padding: 0 1px 0 4px; border: 1px solid #a2a2a2; border-radius: 2px; background: #f0f0f0; font-size: 11px; }
    .doc.on { background: #fff; }
    .more { width: 12px; height: 22px; border: 1px solid #8f8f8f; border-radius: 2px; display: grid; place-items: center; }
    .stage { flex: 1; display: grid; grid-template-columns: 1fr 17px; grid-template-rows: 1fr 17px; min-height: 0; }
    .vs, .hs { display: flex; align-items: center; background: linear-gradient(#e3e3e3, #f2f2f2); }
    .vs { flex-direction: column; border-left: 1px solid #fff; padding: 6px 0; background: linear-gradient(90deg, #e9e9e9, #f3f3f3); }
    .hs { padding: 0 6px; border-top: 1px solid #fff; }
    .thumb { width: 15px; height: 15px; border: 1px solid #8f8f8f; border-radius: 2px; background: linear-gradient(90deg, #f6f6f6, #d4d4d4); flex: none; }
    .low { margin-bottom: 37px; }
    .left { margin-left: 49px; }
    .layers { display: flex; height: 19px; font-size: 11px; }
    .tabline { display: flex; flex: 1; border-top: 1px solid #9a9a9a; padding-left: 3px; }
    .ls { display: flex; width: 47px; height: 15px; margin: 2px 6px 0 0; border: 1px solid #9b9b9b; color: #8e8e8e; line-height: 13px; }
    .ls i { width: 25px; background: #f00; border-right: 1px solid #9b9b9b; } .ls span { flex: 1; text-align: center; }
    .layer { height: 18px; padding: 0 6px; margin-right: -1px; }
    .layer.strong { padding: 0 9px; }
    .layer .in { height: 17px; gap: 4px; }
    .sw { width: 10px; height: 10px; border: 1px solid #999; }
    .masks { display: flex; color: #707070; border-right: 1px solid #cfcfcf; height: 20px; }
    .masks button { border: 1px solid #cfcdc8; border-right: 0; padding: 0 5px; display: flex; align-items: center; gap: 1px; }
    .masks .mode { padding: 0 4px; }
    .under { height: 29px; flex: none; padding: 4px 1px; display: flex; gap: 3px; border-bottom: 1px solid #6e6e6e; color: #6f6f6f; font-size: 11px; }
    .under button { height: 20px; padding: 0 2px; background: #f8f8f8; border: 1px solid #e0e0e0; }
    .side { width: 28px; padding: 1px 5px 0 3px; display: flex; flex-direction: column; gap: 3px; flex: none; }
    .side button { writing-mode: vertical-rl; height: 54px; width: 20px; background: #fafafa; border: 1px solid #dcdcdc; color: #6a6a88; line-height: 18px; text-align: left; padding-top: 2px; }
    .status { display: flex; align-items: center; height: 24px; flex: none; padding: 0 4px; font-size: 11px; border-top: 1px solid #cfcfcf; }
    .status output { white-space: pre; }
    .coords { width: 401px; }
    .mark { width: 1px; height: 18px; background: #9b9b9b; margin-right: 405px; }
    .btns { display: flex; color: #606060; border-right: 1px solid #cdcdcd; margin-right: 4px; }
    .btns button, .tail { height: 18px; border: 1px solid #cdcdcd; border-right: 0; background: #fafafa; padding: 0 7px; }
    .status .tail { border-right: 1px solid #cdcdcd; padding: 0 2px; color: #4a7796; }
  `];

  combo(cls: string, label: string, value: string) {
    return html`<div class="combo ${cls}"><select aria-label=${label}><option>${value}</option></select>${down()}</div>`;
  }
  tools(list: string) {
    return list.split(" ").map((n) => (n === "|" ? html`<span class="sep"></span>` : html`<button class="tool" aria-label=${n}>${ic(n)}</button>`));
  }
  edge(fill: string) {
    return html`<svg class="edge" viewBox="0 0 100 18" preserveAspectRatio="none" aria-hidden="true">
      <path d="M0 0L5 17.500H95L100 0" fill=${fill} stroke="#6a6a6a" vector-effect="non-scaling-stroke" /></svg>`;
  }

  render() {
    return html`
      <header class="title">${ic("app")}
        <h1>(Platform 10.391.22084) - C:\\Users\\David\\Desktop\\Ad-Flier\\altium\\project_files\\FlightController_Bottom.PcbDoc - FlightController_Bottom.PrjPcb. Licensed to University of Florida - Subscription valid. Disconnected.</h1>
        <div class="wins">
          <button aria-label="Minimize"><svg width="12" height="12"><rect x=".5" y="7.500" width="11" height="3" fill="#fff" stroke="#444a60" /></svg></button>
          <button aria-label="Restore"><svg width="13" height="13" fill="none"><rect x="4" y="1.500" width="7" height="7" stroke="#444a60" stroke-width="3" /><rect x="4" y="1.500" width="7" height="7" stroke="#fff" stroke-width="1.500" /><rect x="1.500" y="4" width="7" height="7" fill="#7b8284" stroke="#fff" stroke-width="2" /></svg></button>
          <button class="x" aria-label="Close"><svg width="13" height="11" viewBox="0 0 13 11"><path d="M2 1l9 9M11 1l-9 9" stroke="#50373a" stroke-width="4" /><path d="M2.500 1.500l8 8M10.500 1.500l-8 8" stroke="#fff" stroke-width="2.500" /></svg></button>
        </div>
      </header>
      <nav class="bar">
        <button class="dxp">${ic("dxp")}<span>D<u>X</u>P</span></button>
        <span class="grip g4"></span>
        <div class="menus">${menus.map((m) => html`<a href="#">${caption(m)}</a>`)}</div>
        <span class="grip"></span>
        <div class="drops">${["draw", "align", "find", "dim", "rooms", "grid"].map((n) => html`<button class="drop" aria-label=${n}>${ic(n)}${down()}</button>`)}</div>
        <span class="grow"></span>
        <span class="grip"></span>
        ${this.combo("addr g4", "Address", "C:\\Users\\David\\Desktop\\Ad-Flier\\altium")}
        <div class="navs">
          <button class="nav" aria-label="Back">${ic("back")}${down()}</button>
          <button class="nav" aria-label="Forward">${ic("fwd")}${down("#aaa")}</button>
          <button class="tool" aria-label="Home">${ic("sign", 18)}</button>
        </div>
      </nav>
      <div class="bar tools">
        <span class="grip g4"></span>
        ${this.tools("fresh open save | print preview | chip boards | zoomdoc zoomarea zoomsel zoomfilter | cut copy paste paste2 | select move deselect clearf | undo redo | wand | browse |")}
        ${this.combo("style", "View configuration", "Altium 3D Blue")}
        <span class="grip"></span>
        ${this.tools("route trace route pad via arc fill poly letter comp")}
        <span class="grip g6"></span>
        ${this.combo("vari", "Variation", "[No Variations]")}
        ${this.tools("variant")}
        <span class="grow"></span>
        <span class="grip"></span>
        ${this.combo("c88 g4", "Net", "")}${this.combo("c88", "Component", "")}${this.combo("c169", "Filter", "(All)")}
        ${this.tools("zoomfilter clearf")}
      </div>
      <div class="work">
        <section class="panel ui" aria-label="Projects">
          <div class="phead"><h2>Projects</h2>
            <button aria-label="Panel menu"><svg width="10" height="5"><path d="M0 0h10L5 5z" /></svg></button>
            <button aria-label="Pin">${ic("pin", 12)}</button><button aria-label="Close panel">${ic("close", 12)}</button></div>
          <div class="form">
            ${this.combo("box", "Workspace file", "Workspace1.DsnWrk")}<button class="push">Workspace</button>
            <input class="box" aria-label="Project file" .value=${"FlightController_Bottom.PrjPcb"} /><button class="push">Project</button>
          </div>
          <div class="views">
            <label><input type="radio" name="view" checked />File View</label>
            <label><input type="radio" name="view" />Structure Editor</label>
            <span class="grow"></span>
            <button class="push" aria-label="Refresh">${ic("refresh")}</button>
            <button class="push wide" aria-label="Options">${ic("folderdoc")}${down()}</button>
          </div>
          <project-tree></project-tree>
          <div class="ptabs">
            <button class="cut w45">${this.edge("#f4f4f4")}<span class="in">Files</span></button>
            <button class="cut w64 strong">${this.edge("#a09c94")}<span class="in">Projects</span></button>
            <button class="cut w73">${this.edge("#f4f4f4")}<span class="in">Navigator</span></button>
          </div>
        </section>
        <main class="main">
          <div class="docs">
            <button class="doc">${ic("board")}FlightController_Top_6x6.PcbDoc</button>
            <button class="doc on">${ic("board")}FlightController_Bottom.PcbDoc</button>
            <button class="doc">${ic("ie")}Design Rule Check - FlightController_Top_6x6.html</button>
            <button class="doc">${ic("account")}My Account</button>
            <span class="grow"></span>
            <button class="more" aria-label="More documents"><svg width="8" height="16" viewBox="0 0 8 16" fill="none"><path d="M.5 3l2.500 2.500L.5 8M4.500 3L7 5.500 4.500 8" stroke="#000" stroke-width="1.200" /><path d="M1.500 12h5L4 15z" fill="#000" /></svg></button>
          </div>
          <div class="stage">
            <pcb-canvas></pcb-canvas>
            <div class="vs"><svg width="7" height="5"><path d="M0 5h7L3.500 0z" fill="#444" /></svg><span class="grow"></span><span class="thumb low"></span><svg width="7" height="5"><path d="M0 0h7L3.500 5z" fill="#444" /></svg></div>
            <div class="hs"><svg width="5" height="7"><path d="M5 0v7L0 3.500z" fill="#444" /></svg><span class="thumb left"></span><span class="grow"></span><svg width="5" height="7"><path d="M0 0v7l5-3.500z" fill="#444" /></svg></div>
          </div>
          <div class="layers">
            <div class="tabline">
              <div class="ls"><i></i><span>LS</span></div>
              ${layers.map(([n, c]) => html`<button class=${classMap({ cut: true, layer: true, strong: n === this.layer })} @click=${() => (this.layer = n)}>
                ${this.edge(n === this.layer ? "#f0f0f0" : "#fff")}<span class="in"><span class="sw" style="background:${c}"></span>${n}</span></button>`)}
            </div>
            <div class="masks"><button class="mode" aria-label="Filter"><svg width="7" height="14" viewBox="0 0 7 14"><g fill="#f6ef3c" stroke="#555" stroke-width=".9"><circle cx="3.500" cy="3.500" r="2.600" /><circle cx="3.500" cy="10.500" r="2.600" /></g></svg>
              <svg width="5" height="9"><path d="M0 0l5 4.500L0 9z" fill="#777" /></svg>
              <svg width="11" height="10" viewBox="0 0 11 10"><path d="M1 1h9L6.500 5v4h-2V5z" fill="#cfe" stroke="#445" stroke-width="1.300" /></svg></button>
              <button>Snap</button><button>Mask Level</button><button>Clear</button></div>
          </div>
        </main>
        <aside class="side"><button>Favorites</button><button>Clipboard</button></aside>
      </div>
      <div class="under"><button>Messages</button><button>PCB List</button></div>
      <footer class="status">
        <output class="coords">X:81.788mm Y:81.915mm    Grid: 0.127mm       (Hotspot Snap) (Flipped)</output>
        <span class="mark"></span><span class="mark"></span><span class="grow"></span>
        <div class="btns">${["&System", "&Design Compiler", "&Help", "&Instruments", "&PCB"].map((b) => html`<button>${caption(b)}</button>`)}</div>
        <button class="tail" aria-label="More panels">&gt;&gt;</button>
      </footer>
      <windows-taskbar></windows-taskbar>`;
  }
}
